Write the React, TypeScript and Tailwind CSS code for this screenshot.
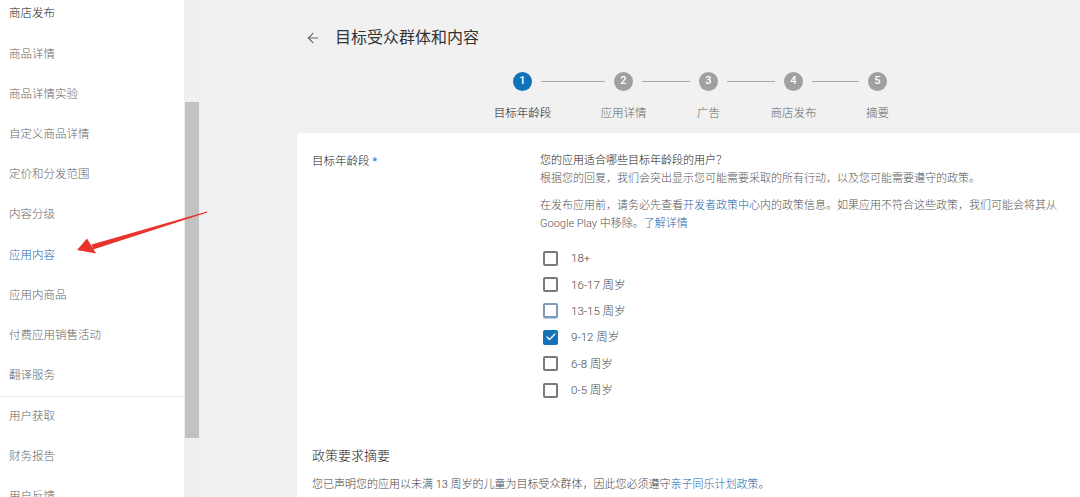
// Google Play Console: target audience & content step
import { ArrowLeft, Check } from 'lucide-react';

const navTop = [
  { label: '商店发布', tone: 'head' },
  { label: '商品详情' },
  { label: '商品详情实验' },
  { label: '自定义商品详情' },
  { label: '定价和分发范围' },
  { label: '内容分级' },
  { label: '应用内容', tone: 'active' },
  { label: '应用内商品' },
  { label: '付费应用销售活动' },
  { label: '翻译服务' },
];

const navBottom = ['用户获取', '财务报告', '用户反馈'];

const steps = [
  { n: 1, label: '目标年龄段', line: 64 },
  { n: 2, label: '应用详情', line: 48 },
  { n: 3, label: '广告', line: 48 },
  { n: 4, label: '商店发布', line: 47 },
  { n: 5, label: '摘要', line: 0 },
];

const ages = [
  { label: '18+' },
  { label: '16-17 周岁' },
  { label: '13-15 周岁', focus: true },
  { label: '9-12 周岁', checked: true },
  { label: '6-8 周岁' },
  { label: '0-5 周岁' },
];

const Sidebar = () => (
  <aside className="w-[184px] shrink-0 bg-white">
    <div className="-mt-[6px]">
      {navTop.map((item) => (
        <div
          key={item.label}
          className={
            'flex h-[40.2px] items-center pl-[9px] text-[11.5px] ' +
            (item.tone === 'head'
              ? 'text-[#222]'
              : item.tone === 'active'
                ? 'text-[#1f66ad]'
                : 'text-[#666]')
          }
        >
          {item.label}
        </div>
      ))}
      <div className="h-px bg-[#ececec]" />
      {navBottom.map((label) => (
        <div key={label} className="flex h-[40px] items-center pl-[9px] text-[11.5px] text-[#666]">
          {label}
        </div>
      ))}
    </div>
  </aside>
);

const Stepper = () => (
  <div className="ml-[313px] mt-[24px] flex items-start">
    {steps.map((s) => (
      <div key={s.n} className="flex items-start">
        <div className="flex w-[19px] flex-col items-center">
          <div
            className={
              'flex h-[19px] w-[19px] items-center justify-center rounded-full text-[11px] font-medium text-white ' +
              (s.n === 1 ? 'bg-[#1272b9]' : 'bg-[#a0a0a0]')
            }
          >
            {s.n}
          </div>
          <div
            className={
              'mt-[14px] whitespace-nowrap text-[11.5px] leading-[16px] ' +
              (s.n === 1 ? 'text-[#222]' : 'text-[#666]')
            }
          >
            {s.label}
          </div>
        </div>
        {s.line > 0 && <div className="mx-[9px] mt-[9px] h-px bg-[#a8a8a8]" style={{ width: s.line }} />}
      </div>
    ))}
  </div>
);

const AgeBox = ({ checked, focus }: { checked?: boolean; focus?: boolean }) => {
  if (checked) {
    return (
      <div className="flex h-[15px] w-[15px] items-center justify-center rounded-[2px] bg-[#1472b8]">
        <Check className="h-[12px] w-[12px] text-white" strokeWidth={2.5} />
      </div>
    );
  }
  return (
    <div
      className={
        'h-[15px] w-[15px] rounded-[2px] border-2 ' +
        (focus ? 'border-[#7f9ab3] shadow-[0_1px_1px_#a9cbe6]' : 'border-[#7a7a7a]')
      }
    />
  );
};

export default function App() {
  return (
    <div className="relative flex h-[497px] w-[1080px] overflow-hidden font-['Roboto','Noto_Sans_CJK_SC',sans-serif] font-light">
      <Sidebar />

      {/* scrollbar */}
      <div className="w-[16px] shrink-0 bg-[#efefef] px-[1px] pt-[102px]">
        <div className="h-[336px] bg-[#c2c2c2]" />
      </div>

      <main className="flex min-w-0 flex-1 flex-col bg-[#f1f1f2]">
        <div className="mt-[28px] flex h-[20px] items-center pl-[105px]">
          <ArrowLeft className="h-[16px] w-[16px] text-[#666]" strokeWidth={1.6} />
          <h1 className="ml-[14px] text-[16px] font-normal text-[#333]">目标受众群体和内容</h1>
        </div>

        <Stepper />

        <section className="ml-[97px] mt-[12px] flex-1 rounded-tl-[3px] bg-white pl-[15px] pt-[19px] shadow-[0_0_1px_rgba(0,0,0,0.12)]">
          <div className="flex">
            <div className="w-[228px] shrink-0 text-[11.5px] leading-[18px] text-[#222]">
              目标年龄段 <span className="font-normal text-[#1a73e8]">*</span>
            </div>
            <div className="text-[11px] leading-[18px]">
              <div className="text-[#222]">您的应用适合哪些目标年龄段的用户？</div>
              <div className="text-[#555]">根据您的回复，我们会突出显示您可能需要采取的所有行动，以及您可能需要遵守的政策。</div>
              <div className="mt-[9px] text-[#555]">
                在发布应用前，请务必先查看<span className="text-[#1a66aa]">开发者政策中心</span>内的政策信息。如果应用不符合这些政策，我们可能会将其从
                <br />
                Google Play 中移除。<span className="text-[#1a66aa]">了解详情</span>
              </div>
              <div className="mt-[12px]">
                {ages.map((a) => (
                  <div key={a.label} className="flex h-[26.4px] items-center pl-[3px]">
                    <AgeBox checked={a.checked} focus={a.focus} />
                    <span className="ml-[13px] text-[11.5px] text-[#444]">{a.label}</span>
                  </div>
                ))}
              </div>
            </div>
          </div>

          <div className="mt-[43px] text-[13px] leading-[20px] text-[#222]">政策要求摘要</div>
          <div className="mt-[10px] text-[11px] leading-[18px] text-[#444]">
            您已声明您的应用以未满 13 周岁的儿童为目标受众群体，因此您必须遵守<span className="text-[#1a66aa]">亲子同乐计划政策</span>。
          </div>
        </section>
      </main>

      {/* red annotation arrow */}
      <svg className="pointer-events-none absolute left-0 top-0" width="1080" height="497" viewBox="0 0 1080 497">
        <polygon points="207,211.6 207.3,212.6 93,249.5 91.5,244.5" fill="#e8332b" />
        <polygon points="77,250 87,238.5 96,253.5" fill="#e8332b" />
      </svg>
    </div>
  );
}
